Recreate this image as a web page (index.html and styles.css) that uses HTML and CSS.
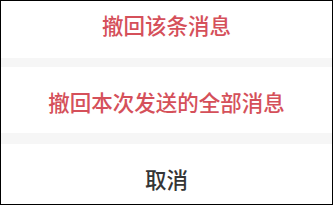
FILE: index.html
```html
<!DOCTYPE html>
<html lang="zh">
<head>
<meta charset="utf-8">
<link rel="stylesheet" href="styles.css">
</head>
<body>
<div class="sheet">
  <div class="item item-first danger">撤回该条消息</div>
  <div class="gap gap-a"></div>
  <div class="item item-mid danger">撤回本次发送的全部消息</div>
  <div class="gap gap-b"></div>
  <div class="item item-last">取消</div>
</div>
</body>
</html>
```
FILE: styles.css
```css
html, body {
  margin: 0;
  padding: 0;
  background: #fff;
}
.sheet {
  width: 333px;
  height: 205px;
  box-sizing: border-box;
  border: 1px solid #000;
  display: flex;
  flex-direction: column;
  background: #fff;
  font-family: "Noto Sans CJK SC", "Noto Sans", sans-serif;
  font-size: 21.5px;
  font-weight: 500;
  line-height: 22px;
  overflow: hidden;
}
.item {
  text-align: center;
  box-sizing: border-box;
  color: #353535;
}
.danger {
  color: #d5505a;
}
.item-first {
  height: 57px;
  padding-top: 13px;
}
.item-mid {
  height: 66px;
  padding-top: 24px;
}
.item-last {
  flex: 1;
  padding-top: 24px;
}
.gap {
  background: #f6f6f6;
}
.gap-a {
  height: 9px;
}
.gap-b {
  height: 11px;
}
```
